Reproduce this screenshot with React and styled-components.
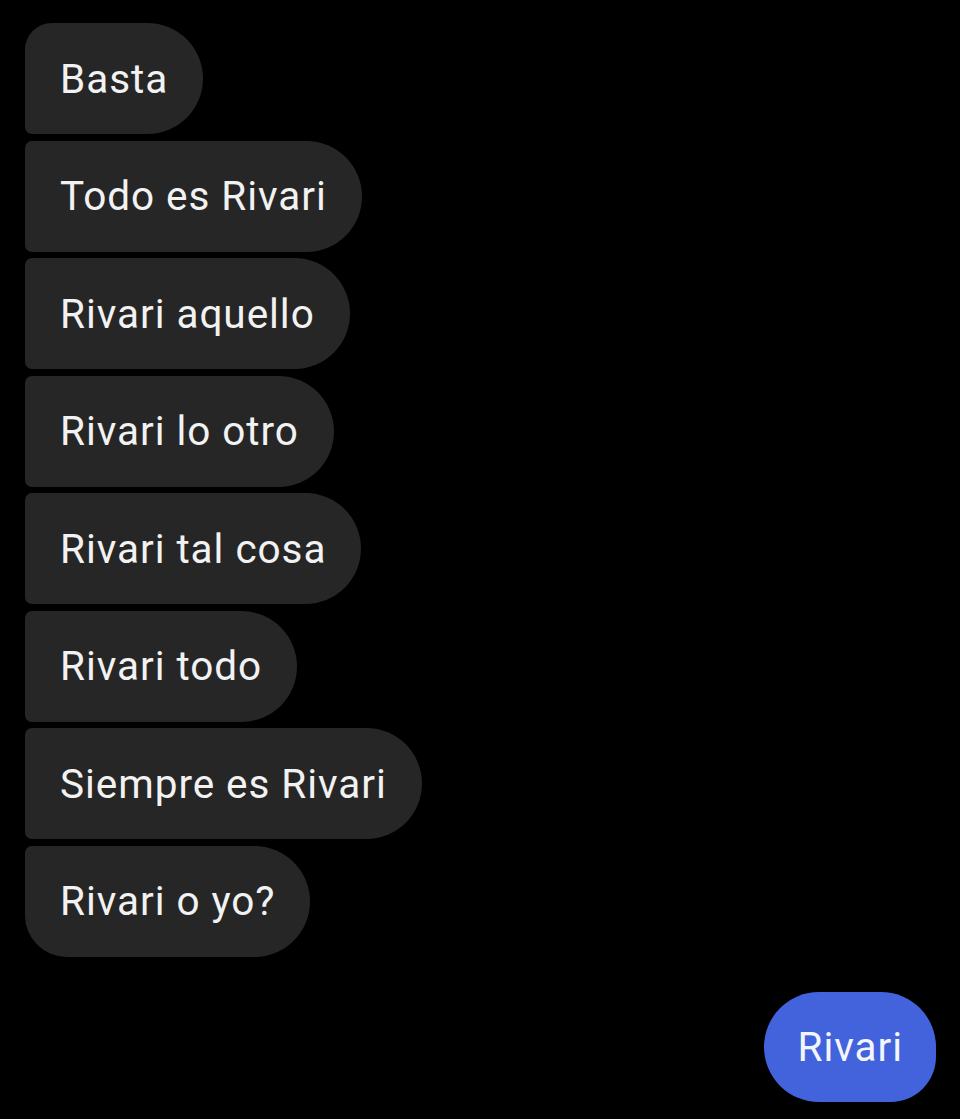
import React from 'react'
import styled, { createGlobalStyle } from 'styled-components'

const GlobalStyle = createGlobalStyle`
	html, body {
		margin: 0;
		padding: 0;
		background: #000;
	}
	body {
		font-family: Roboto, "Noto Sans", sans-serif;
		-webkit-font-smoothing: antialiased;
	}
`

const Screen = styled.div`
	width: 960px;
	height: 1119px;
	background: #000;
	box-sizing: border-box;
	padding: 23px 24px 0 25px;
	display: flex;
	flex-direction: column;
	overflow: hidden;
`

const Thread = styled.div`
	display: flex;
	flex-direction: column;
	align-items: flex-start;
	gap: 6.5px;
`

const radii = {
	first: '27px 56px 56px 7px',
	middle: '7px 56px 56px 7px',
	last: '7px 56px 56px 42px',
}

const Bubble = styled.div`
	box-sizing: border-box;
	height: 111px;
	padding: 0 35px 0 35px;
	display: flex;
	align-items: center;
	background: #262626;
	color: #f2f2f2;
	font-size: 40.5px;
	letter-spacing: 0.95px;
	border-radius: ${(p) => radii[p.$pos]};
	white-space: nowrap;
`

const Sent = styled.div`
	align-self: flex-end;
	margin-top: 35px;
	box-sizing: border-box;
	height: 110px;
	padding: 0 33px 0 34px;
	display: flex;
	align-items: center;
	background: #4263dc;
	color: #f4f6ff;
	font-size: 40.5px;
	letter-spacing: 0.95px;
	border-radius: 56px 56px 46px 56px;
`

const messages = [
	'Basta',
	'Todo es Rivari',
	'Rivari aquello',
	'Rivari lo otro',
	'Rivari tal cosa',
	'Rivari todo',
	'Siempre es Rivari',
	'Rivari o yo?',
]

export default function App() {
	return (
		<>
			<GlobalStyle />
			<Screen>
				<Thread>
					{messages.map((text, i) => (
						<Bubble
							key={i}
							$pos={i === 0 ? 'first' : i === messages.length - 1 ? 'last' : 'middle'}
						>
							{text}
						</Bubble>
					))}
				</Thread>
				<Sent>Rivari</Sent>
			</Screen>
		</>
	)
}
